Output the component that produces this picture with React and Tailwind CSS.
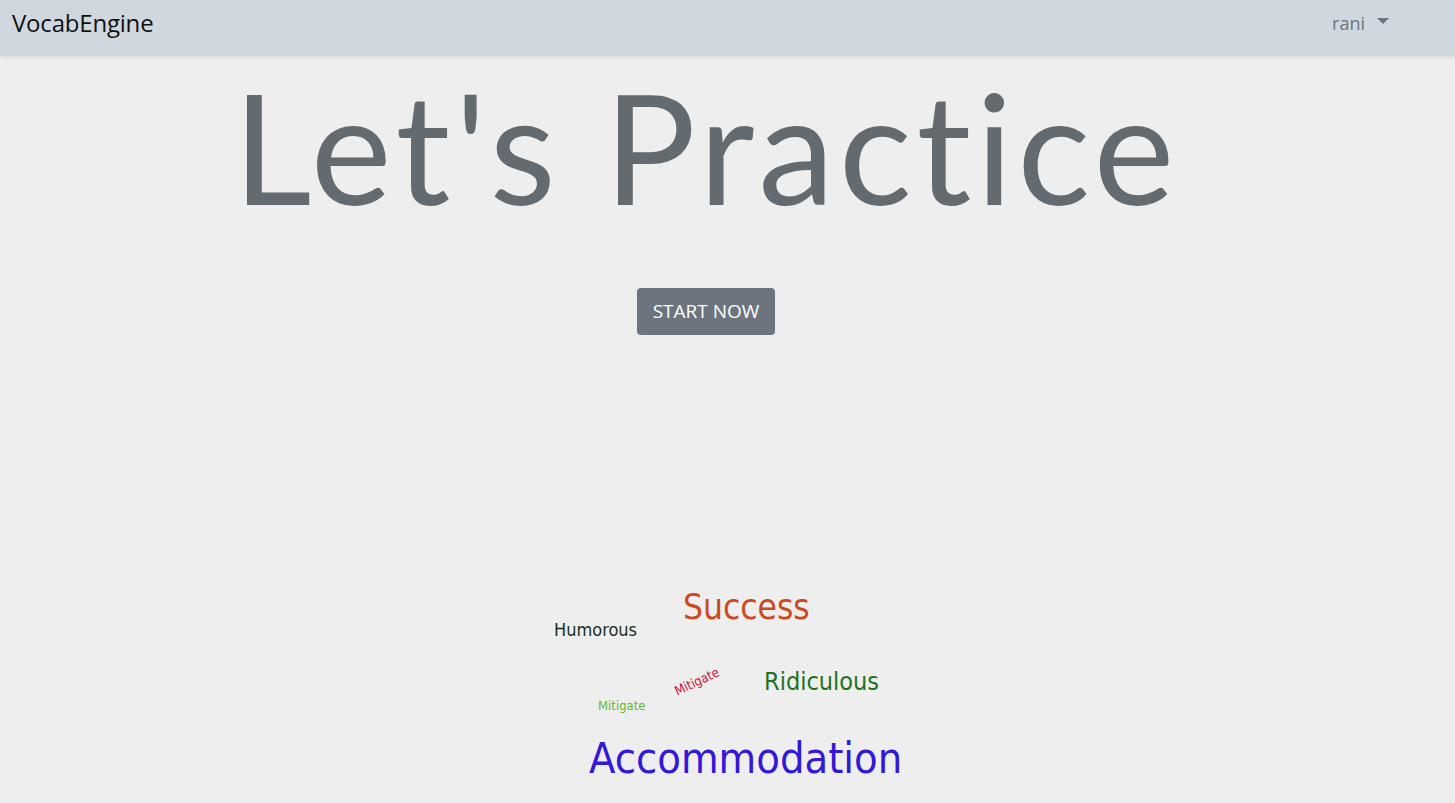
import React from 'react'

const words = [
  { text: 'Success', x: 683, y: 590, size: 'text-[35px]', color: 'text-[#c94a1c]' },
  { text: 'Humorous', x: 554, y: 621, size: 'text-[18px]', color: 'text-[#17321a]' },
  { text: 'Ridiculous', x: 764, y: 669, size: 'text-[25px]', color: 'text-[#1c731c]' },
  { text: 'Mitigate', x: 598, y: 699, size: 'text-[13px]', color: 'text-[#66b832]' },
  { text: 'Accommodation', x: 589, y: 737, size: 'text-[43px]', color: 'text-[#3318d8]' },
]

const WordCloud = () => (
  <div className="relative h-[235px] w-full font-['DejaVu_Sans',sans-serif] font-stretch-semi-condensed">
    {words.map((w) => (
      <span
        key={w.text + w.x}
        className={`absolute leading-none whitespace-nowrap ${w.size} ${w.color}`}
        style={{ left: w.x, top: w.y - 568 }}
      >
        {w.text}
      </span>
    ))}
    <span
      className="absolute leading-none whitespace-nowrap text-[13px] text-[#c4173f] -rotate-[25deg] origin-center"
      style={{ left: 673, top: 675 - 568 }}
    >
      Mitigate
    </span>
  </div>
)

export default function App() {
  return (
    <div className="min-h-screen bg-[#eeeeee] font-['Open_Sans',sans-serif] overflow-hidden">
      <nav className="h-14 bg-[#d0d7de] shadow-[0_2px_4px_rgba(0,0,0,0.08)] flex items-center justify-between pl-3 pr-[66px] pb-[10px]">
        <span className="text-[24px] text-[#111] tracking-[-0.2px]">VocabEngine</span>
        <button className="flex items-center gap-3 text-[18px] text-[#6c757d]">
          rani
          <span className="w-0 h-0 border-l-[6px] border-r-[6px] border-t-[6px] border-l-transparent border-r-transparent border-t-[#6c757d] mb-1" />
        </button>
      </nav>

      <main className="flex flex-col items-center">
        <div className="flex flex-col items-center pr-[43px]">
          <h1 className="font-['Lato',sans-serif] text-[#636b70] text-[153px] leading-none mt-[14px] tracking-[4.6px]">
            Let's Practice
          </h1>
          <button className="mt-[65px] h-[47px] px-4 rounded bg-[#6c757d] text-white text-[19px] uppercase">
            Start now
          </button>
        </div>
        <div className="w-full mt-[233px]">
          <WordCloud />
        </div>
      </main>
    </div>
  )
}
